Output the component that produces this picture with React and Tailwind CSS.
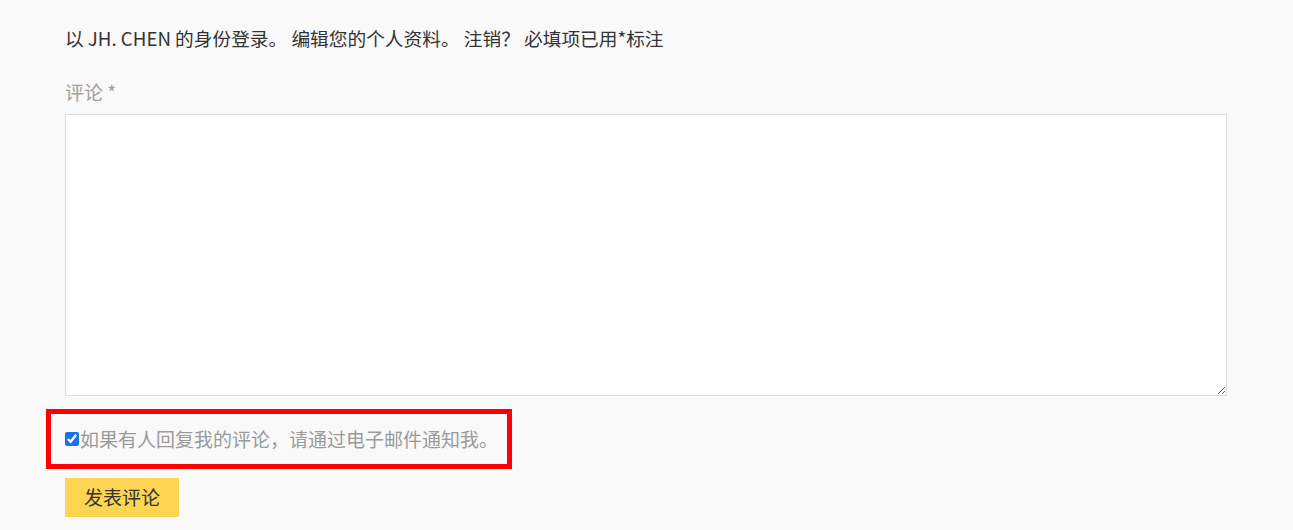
export default function App() {
  const font = { fontFamily: '"Noto Sans CJK SC", "Noto Sans", sans-serif' };
  return (
    <div className="w-[1293px] h-[530px] bg-[#f9f9f9] overflow-hidden" style={font}>
      <div className="pl-[65px] pr-[66px] pt-[24px]">
        <p className="text-[18.7px] leading-[28px] text-[#333333]">
          以 JH. CHEN 的身份登录。 编辑您的个人资料。 注销？ 必填项已用*标注
        </p>
        <label className="block mt-[26px] text-[19px] leading-[28px] text-[#a0a0a0]">评论 *</label>
        <textarea className="block mt-[8px] w-full h-[282px] bg-white border border-[#dddddd] outline-none resize-y" />
        <div className="ml-[-19px] mt-[13px] w-[466px] h-[60px] border-[5px] border-[#ff0000] flex items-center pl-[14px]">
          <input type="checkbox" defaultChecked className="w-[14px] h-[14px] m-0 accent-[#1a73e8]" />
          <span className="ml-[1px] text-[19px] leading-[28px] text-[#9a9a9a]">如果有人回复我的评论，请通过电子邮件通知我。</span>
        </div>
        <button className="mt-[9px] w-[114px] h-[39px] bg-[#fdd552] text-[19px] text-[#333333] flex items-center justify-center">发表评论</button>
      </div>
    </div>
  );
}
